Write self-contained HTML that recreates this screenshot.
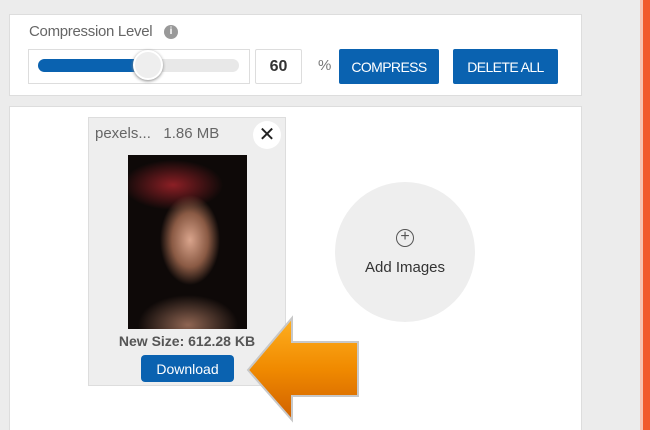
<!DOCTYPE html>
<html style="overflow:hidden;height:430px"><head><style>
body{margin:0;width:650px;height:430px;background:#ececec;position:relative;overflow:hidden;font-family:"Liberation Sans",sans-serif}
.a{position:absolute}
.panel{background:#fff;border:1px solid #ddd;box-sizing:border-box}
.btn{background:#0a62b0;color:#fff;font-size:14px;display:flex;align-items:center;justify-content:center;border-radius:2px}
</style></head><body>
<div class="a" style="left:643px;top:0;width:7px;height:430px;background:#f15a2b"></div>
<div class="a" style="left:640px;top:0;width:3px;height:430px;background:#f7c2b0"></div>
<div class="a panel" style="left:9px;top:14px;width:573px;height:82px"></div>
<div class="a" style="left:29px;top:23px;font-size:15px;color:#666;letter-spacing:-0.3px">Compression Level</div>
<div class="a" style="left:164px;top:25px;width:14px;height:14px;border-radius:50%;background:#999;color:#fff;font-size:10px;font-weight:bold;text-align:center;line-height:14px">i</div>
<div class="a" style="left:28px;top:49px;width:222px;height:35px;border:1px solid #ddd;box-sizing:border-box"></div>
<div class="a" style="left:38px;top:59px;width:201px;height:13px;border-radius:7px;background:#e8e8e8"></div>
<div class="a" style="left:38px;top:59px;width:115px;height:13px;border-radius:7px;background:#0a62b0"></div>
<div class="a" style="left:133px;top:50px;width:30px;height:30px;border-radius:50%;background:#eee;border:2px solid #fff;box-shadow:0 1px 3px #888;box-sizing:border-box"></div>
<div class="a" style="left:255px;top:49px;width:47px;height:35px;border:1px solid #ddd;border-radius:2px;box-sizing:border-box;font-size:16px;font-weight:bold;color:#333;text-align:center;line-height:33px">60</div>
<div class="a" style="left:318px;top:57px;font-size:15px;color:#777">%</div>
<div class="a btn" style="left:339px;top:49px;width:100px;height:35px;letter-spacing:-0.6px">COMPRESS</div>
<div class="a btn" style="left:453px;top:49px;width:105px;height:35px;letter-spacing:-0.6px">DELETE ALL</div>
<div class="a panel" style="left:9px;top:106px;width:573px;height:340px"></div>
<div class="a" style="left:88px;top:117px;width:198px;height:269px;background:#eee;border:1px solid #ddd;box-sizing:border-box"></div>
<div class="a" style="left:95px;top:125px;font-size:15px;color:#666">pexels...&nbsp;&nbsp; 1.86 MB</div>
<div class="a" style="left:253px;top:121px;width:28px;height:28px;border-radius:50%;background:#fff;font-size:20px;text-align:center;line-height:28px;color:#222">✕</div>
<div class="a" style="left:128px;top:155px;width:119px;height:174px;background:radial-gradient(ellipse 30px 45px at 62px 85px,#d9a48c,#8a5a44 60%,transparent 100%),radial-gradient(ellipse 50px 30px at 60px 170px,#8f6552,transparent),radial-gradient(ellipse 50px 25px at 45px 30px,#8c1f25,transparent),#0e0908"></div>
<div class="a" style="left:88px;top:333px;width:198px;text-align:center;font-size:14px;font-weight:bold;color:#555">New Size: 612.28 KB</div>
<div class="a btn" style="left:141px;top:355px;width:93px;height:27px;border-radius:4px">Download</div>
<div class="a" style="left:335px;top:182px;width:140px;height:140px;border-radius:50%;background:#eee"></div>
<div class="a" style="left:396px;top:229px;width:18px;height:18px;border:1.5px solid #555;border-radius:50%;box-sizing:border-box;font-size:16px;line-height:14px;text-align:center;color:#555">+</div>
<div class="a" style="left:335px;top:259px;width:140px;text-align:center;font-size:15px;color:#333">Add Images</div>
<svg class="a" style="left:240px;top:310px" width="125" height="115">
<defs><linearGradient id="g" x1="0" y1="0" x2="0" y2="1"><stop offset="0" stop-color="#ffb020"/><stop offset=".5" stop-color="#f08a00"/><stop offset="1" stop-color="#d06000"/></linearGradient></defs>
<polygon points="8,60 52,8 52,32 118,32 118,86 52,86 52,110" fill="url(#g)" stroke="#c8c8c8" stroke-width="2"/>
</svg>
</body></html>
